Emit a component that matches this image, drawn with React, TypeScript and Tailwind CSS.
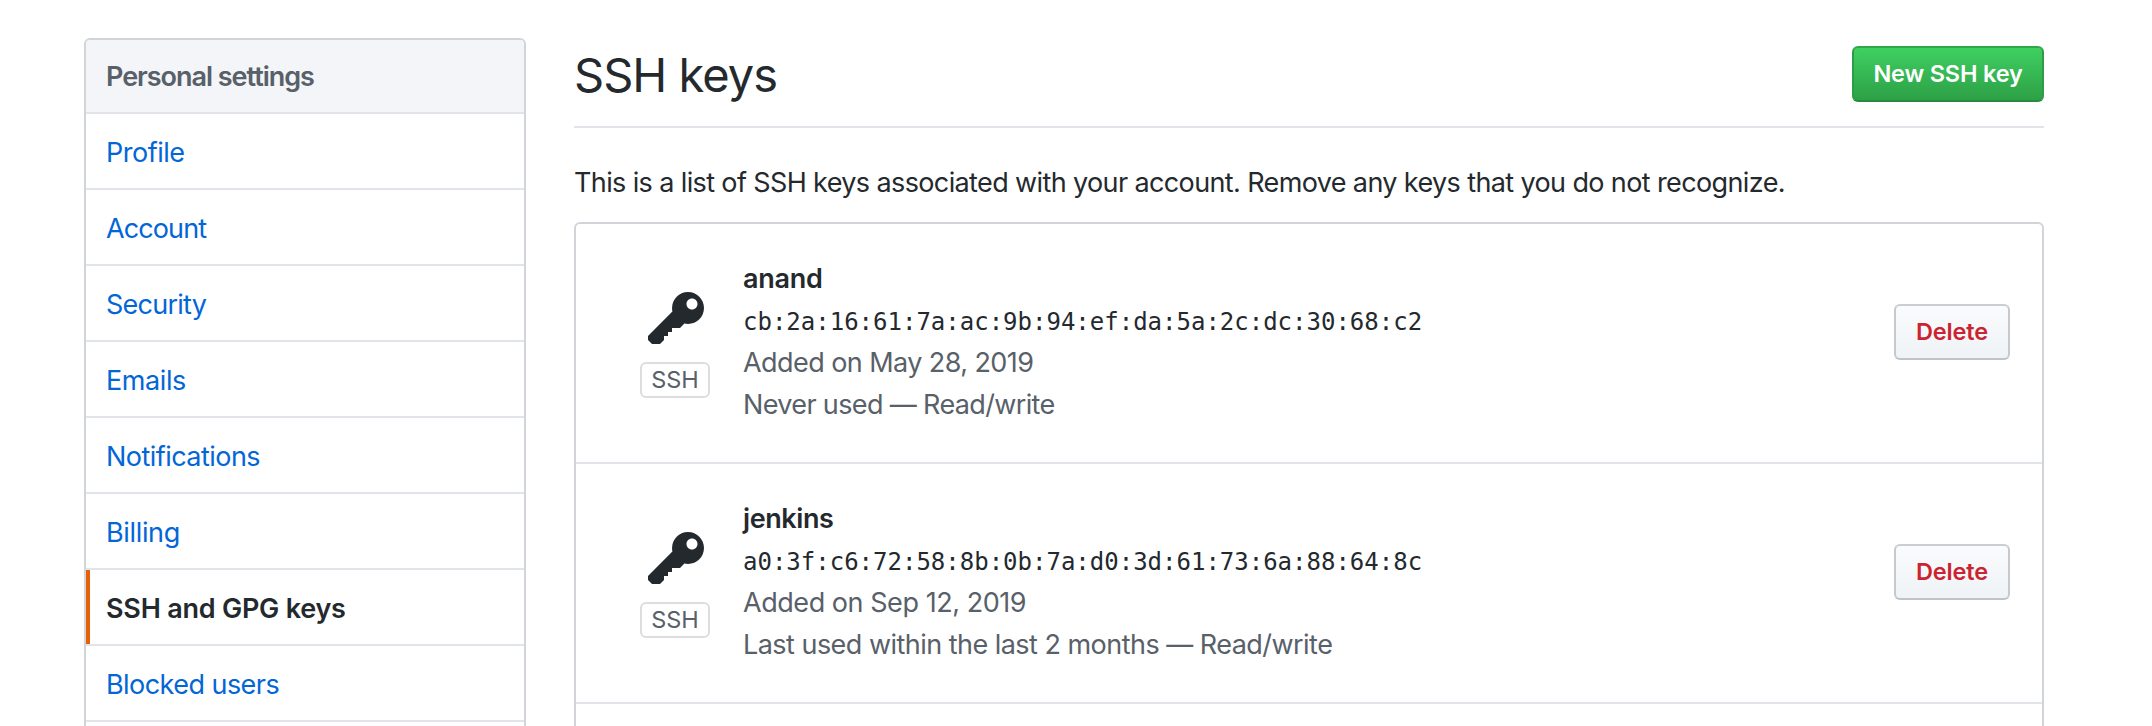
const navItems = [
  { label: "Profile", spacing: "tracking-[-0.5px]" },
  { label: "Account", spacing: "tracking-[-0.9px]" },
  { label: "Security", spacing: "tracking-[-0.75px]" },
  { label: "Emails", spacing: "tracking-[-0.4px]" },
  { label: "Notifications", spacing: "tracking-[-0.54px]" },
  { label: "Billing", spacing: "tracking-[-0.35px]" },
  { label: "SSH and GPG keys", spacing: "tracking-[-0.23px]", selected: true },
  { label: "Blocked users", spacing: "tracking-[-0.55px]" },
];

const sshKeys = [
  {
    name: "anand",
    nameSpacing: "tracking-[-0.26px]",
    fingerprint: "cb:2a:16:61:7a:ac:9b:94:ef:da:5a:2c:dc:30:68:c2",
    added: "Added on May 28, 2019",
    addedSpacing: "tracking-[-0.57px]",
    used: "Never used — Read/write",
    usedSpacing: "tracking-[-0.64px]",
  },
  {
    name: "jenkins",
    nameSpacing: "tracking-[-0.42px]",
    fingerprint: "a0:3f:c6:72:58:8b:0b:7a:d0:3d:61:73:6a:88:64:8c",
    added: "Added on Sep 12, 2019",
    addedSpacing: "tracking-[-0.45px]",
    used: "Last used within the last 2 months — Read/write",
    usedSpacing: "tracking-[-0.53px]",
  },
];

function KeyIcon() {
  return (
    <svg width="56" height="64" viewBox="0 0 14 16" fill="currentColor" className="ml-0.5" aria-hidden="true">
      <path
        fillRule="evenodd"
        d="M12.83 2.17C12.08 1.42 11.14 1.03 10 1c-1.13.03-2.08.42-2.83 1.17S6.04 3.86 6.01 5c0 .3.03.59.09.89L0 12v1l1 1h2l1-1v-1h1v-1h1v-1h2l1.09-1.11c.3.08.59.11.91.11 1.14-.03 2.08-.42 2.83-1.17S13.97 6.14 14 5c-.03-1.14-.42-2.08-1.17-2.83zM11 5.38c-.77 0-1.38-.61-1.38-1.38 0-.77.61-1.38 1.38-1.38.77 0 1.38.61 1.38 1.38 0 .77-.61 1.38-1.38 1.38z"
      />
    </svg>
  );
}

function Sidebar() {
  return (
    <nav className="h-[760px] w-[442px] shrink-0 self-start overflow-hidden rounded-md border-2 border-[#d1d5da] bg-white">
      <h3 className="flex h-[74px] items-center border-b-2 border-[#e1e4e8] bg-[#f3f5f8] pt-0.5 pl-5 font-semibold tracking-[-1.03px] text-[#586069]">
        Personal settings
      </h3>
      {navItems.map((item) => (
        <a
          key={item.label}
          className={`flex h-[76px] items-stretch border-b-2 border-[#e1e4e8] ${item.spacing} ${
            item.selected ? "font-semibold text-[#24292e]" : "text-[#0366d6]"
          }`}
        >
          <span className={`w-1 ${item.selected ? "bg-[#e36209]" : ""}`} />
          <span className="flex items-center pt-1 pl-4">{item.label}</span>
        </a>
      ))}
    </nav>
  );
}

export default function App() {
  return (
    <div className="flex h-[726px] w-[2152px] overflow-hidden bg-white pt-[38px] pl-[84px] font-[Inter,sans-serif] text-[27px] leading-[42px] text-[#24292e]">
      <Sidebar />
      <main className="ml-12 w-[1470px] shrink-0">
        <header className="flex h-[90px] items-start justify-between border-b-2 border-[#e1e4e8] pt-2">
          <h1 className="pt-px text-[47px] leading-[56px] tracking-[-0.98px] whitespace-nowrap">SSH keys</h1>
          <button className="flex h-14 w-48 items-center justify-center rounded-md border-2 border-t-[#30a849] border-r-[#2f9c46] border-b-[#278a3d] border-l-[#2f9c46] bg-linear-to-b from-[#3fd062] to-[#2da046] text-[23.5px] font-semibold tracking-[-0.18px] whitespace-nowrap text-white">
            New SSH key
          </button>
        </header>
        <p className="pt-[34px] tracking-[-0.62px] whitespace-nowrap">
          This is a list of SSH keys associated with your account. Remove any keys that you do not recognize.
        </p>
        <ul className="mt-[18px] h-[600px] rounded-md border-2 border-[#d1d5da]">
          {sshKeys.map((k) => (
            <li key={k.name} className="flex h-60 border-b-2 border-[#e1e4e8] pr-8">
              <div className="ml-16 flex w-[70px] flex-col items-center pt-16 text-[#24292e]">
                <KeyIcon />
                <span className="mt-2.5 flex h-9 w-[70px] items-center justify-center rounded-md border-2 border-[#dddddd] text-[23.5px] tracking-[-0.1px] text-[#586069]">
                  SSH
                </span>
              </div>
              <div className="ml-[33px] grow pt-[34px] whitespace-nowrap">
                <strong className={`block font-semibold ${k.nameSpacing}`}>{k.name}</strong>
                <code className="block h-[42px] pt-px font-['DejaVu_Sans_Mono',monospace] text-[24px]">
                  {k.fingerprint}
                </code>
                <span className={`block text-[#586069] ${k.addedSpacing}`}>{k.added}</span>
                <span className={`block text-[#586069] ${k.usedSpacing}`}>{k.used}</span>
              </div>
              <button className="mt-20 flex h-14 w-[116px] items-center justify-center rounded-md border-2 border-t-[#cbced1] border-r-[#c5c9cd] border-b-[#bfc3c7] border-l-[#c5c9cd] bg-linear-to-b from-[#fafbfc] to-[#eff3f6] text-[23.5px] font-semibold tracking-[-0.16px] text-[#cb2431]">
                Delete
              </button>
            </li>
          ))}
        </ul>
      </main>
    </div>
  );
}
